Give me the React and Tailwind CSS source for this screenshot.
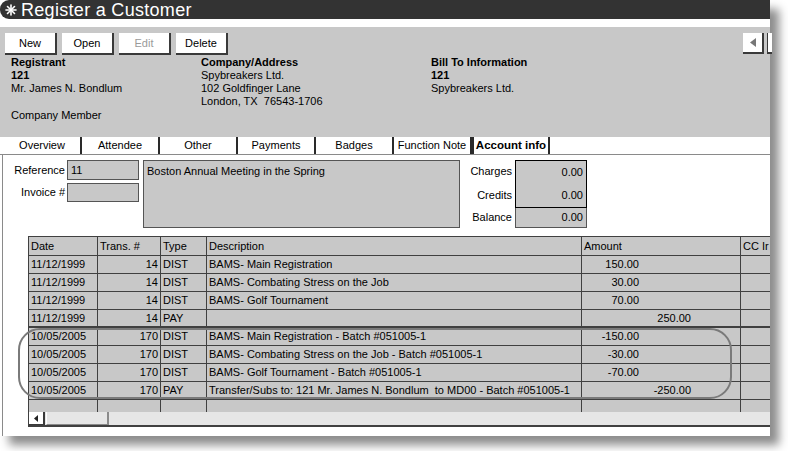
import React from "react";

const font = { fontFamily: '"Liberation Sans", Arial, sans-serif' };

const rows = [
    { date: "11/12/1999", no: "14", type: "DIST", desc: "BAMS- Main Registration", amt: "150.00" },
    { date: "11/12/1999", no: "14", type: "DIST", desc: "BAMS- Combating Stress on the Job", amt: "30.00" },
    { date: "11/12/1999", no: "14", type: "DIST", desc: "BAMS- Golf Tournament", amt: "70.00" },
    { date: "11/12/1999", no: "14", type: "PAY", desc: "", pay: "250.00" },
    { date: "10/05/2005", no: "170", type: "DIST", desc: "BAMS- Main Registration - Batch #051005-1", amt: "-150.00" },
    { date: "10/05/2005", no: "170", type: "DIST", desc: "BAMS- Combating Stress on the Job - Batch #051005-1", amt: "-30.00" },
    { date: "10/05/2005", no: "170", type: "DIST", desc: "BAMS- Golf Tournament - Batch #051005-1", amt: "-70.00" },
    { date: "10/05/2005", no: "170", type: "PAY", desc: "Transfer/Subs to: 121 Mr. James N. Bondlum  to MD00 - Batch #051005-1", pay: "-250.00" },
];

const tabs = ["Overview", "Attendee", "Other", "Payments", "Badges", "Function Note", "Account info"];

function Btn({ label, disabled }) {
    return (
        <div className={"w-[52px] h-[22px] bg-white border-r-2 border-b-2 border-[#3a3a3a] flex items-center justify-center text-[11px] " + (disabled ? "text-[#9a9a9a]" : "text-black")}>
            {label}
        </div>
    );
}

function Cell({ children, className = "" }) {
    return <div className={"border-r border-[#404040] px-[2px] flex items-center whitespace-pre overflow-hidden " + className}>{children}</div>;
}

export default function App() {
    return (
        <div className="w-[788px] h-[451px] bg-white overflow-hidden" style={font}>
            <div className="relative w-[770px] h-[436px] bg-white flex flex-col shadow-[9px_9px_9px_rgba(0,0,0,0.45)]">
                {/* title bar */}
                <div className="h-[19px] bg-[#333333] rounded-l-[9px] flex items-center text-white shrink-0">
                    <svg width="18" height="18" viewBox="0 0 18 18" className="ml-[2px]">
                        <g stroke="white" strokeWidth="1.6" strokeLinecap="round">
                            <line x1="9" y1="4" x2="9" y2="14" />
                            <line x1="4" y1="9" x2="14" y2="9" />
                            <line x1="5.5" y1="5.5" x2="12.5" y2="12.5" />
                            <line x1="12.5" y1="5.5" x2="5.5" y2="12.5" />
                        </g>
                    </svg>
                    <span className="text-[18px] leading-none ml-[1px] tracking-[0.3px]">Register a Customer</span>
                </div>
                <div className="h-[8px] bg-white shrink-0" />

                {/* header */}
                <div className="h-[110px] bg-[#c8c8c8] shrink-0 pt-[6px] px-[5px] text-[11px] text-black">
                    <div className="flex items-start">
                        <div className="flex gap-[5px]">
                            <Btn label="New" />
                            <Btn label="Open" />
                            <Btn label="Edit" disabled />
                            <Btn label="Delete" />
                        </div>
                        <div className="ml-auto flex mr-[-7px]">
                            <div className="w-[21px] h-[21px] bg-white border-r-2 border-b-2 border-[#3a3a3a] flex items-center justify-center">
                                <svg width="6" height="9" viewBox="0 0 6 9"><polygon points="6,0 6,9 0,4.5" fill="#777" /></svg>
                            </div>
                            <div className="w-[5px] h-[21px] ml-[3px] bg-white border-b-2 border-l border-[#3a3a3a]" />
                        </div>
                    </div>
                    <div className="flex leading-[13px] mt-[1px] pl-[6px]">
                        <div className="w-[190px]">
                            <div className="font-bold">Registrant</div>
                            <div className="font-bold">121</div>
                            <div>Mr. James N. Bondlum</div>
                            <div className="mt-[14px]">Company Member</div>
                        </div>
                        <div className="w-[230px]">
                            <div className="font-bold">Company/Address</div>
                            <div>Spybreakers Ltd.</div>
                            <div>102 Goldfinger Lane</div>
                            <div>London, TX&nbsp; 76543-1706</div>
                        </div>
                        <div>
                            <div className="font-bold">Bill To Information</div>
                            <div className="font-bold">121</div>
                            <div>Spybreakers Ltd.</div>
                        </div>
                    </div>
                </div>

                {/* tabs */}
                <div className="h-[18px] bg-white border-b border-[#8a8a8a] flex pl-[4px] shrink-0 text-[11px]">
                    {tabs.map((t, i) => {
                        const active = i === tabs.length - 1;
                        return (
                            <div
                                key={t}
                                className={"w-[78px] h-full flex items-center justify-center border-r-2 border-[#2a2a2a] " + (active ? "font-bold border-l-2 bg-white h-[19px] text-[11.5px]" : "")}
                            >
                                {t}
                            </div>
                        );
                    })}
                </div>

                {/* content */}
                <div className="flex-1 ml-[2px] border-l border-[#8a8a8a] bg-white pt-[5px] text-[11px] flex flex-col">
                    <div className="flex items-start pl-[3px]">
                        <div className="flex flex-col gap-[3px]">
                            <div className="flex items-center">
                                <div className="w-[61px] text-right pr-[2px]">Reference</div>
                                <div className="w-[72px] h-[20px] bg-[#c8c8c8] border border-[#555] flex items-center px-[3px]">11</div>
                            </div>
                            <div className="flex items-center">
                                <div className="w-[61px] text-right pr-[2px]">Invoice #</div>
                                <div className="w-[72px] h-[19px] bg-[#c8c8c8] border border-[#555]" />
                            </div>
                        </div>
                        <div className="ml-[4px] w-[317px] h-[68px] bg-[#c8c8c8] border border-[#555] px-[3px] pt-[2px]">
                            Boston Annual Meeting in the Spring
                        </div>
                        <div className="flex">
                            <div className="w-[55px] text-right pr-[3px] flex flex-col">
                                <div className="h-[23px] flex items-center justify-end">Charges</div>
                                <div className="h-[24px] flex items-center justify-end">Credits</div>
                                <div className="h-[21px] flex items-center justify-end">Balance</div>
                            </div>
                            <div className="w-[72px] flex flex-col">
                                <div className="h-[48px] border border-black bg-[#c8c8c8] flex flex-col">
                                    <div className="h-[23px] flex items-center justify-end pr-[3px]">0.00</div>
                                    <div className="h-[23px] flex items-center justify-end pr-[3px]">0.00</div>
                                </div>
                                <div className="h-[20px] border border-t-0 border-[#555] bg-[#c8c8c8] flex items-center justify-end pr-[3px]">0.00</div>
                            </div>
                        </div>
                    </div>

                    {/* grid */}
                    <div className="mt-[8px] ml-[25px] h-[191px] bg-[#c8c8c8] border-t border-l border-b-2 border-[#404040] overflow-hidden flex flex-col">
                        <div className="grid grid-cols-[69px_63px_46px_375px_159px_60px] h-[19px] border-b border-[#404040]">
                            <Cell>Date</Cell>
                            <Cell>Trans. #</Cell>
                            <Cell>Type</Cell>
                            <Cell>Description</Cell>
                            <Cell>Amount</Cell>
                            <Cell>CC Ir</Cell>
                        </div>
                        {rows.map((r, i) => (
                            <div key={i} className={"grid grid-cols-[69px_63px_46px_375px_159px_60px] h-[18px] border-b border-[#404040] " + (i === 3 ? "border-b-2" : "")}>
                                <Cell>{r.date}</Cell>
                                <Cell className="justify-end">{r.no}</Cell>
                                <Cell>{r.type}</Cell>
                                <Cell>{r.desc}</Cell>
                                <Cell className={"justify-end " + (r.pay ? "pr-[49px]" : "pr-[101px]")}>{r.pay || r.amt}</Cell>
                                <Cell />
                            </div>
                        ))}
                        <div className="grid grid-cols-[69px_63px_46px_375px_159px_60px] h-[12px]">
                            <Cell />
                            <Cell />
                            <Cell />
                            <Cell />
                            <Cell />
                            <Cell />
                        </div>
                        <div className="flex-1 bg-[#e6e6e6] flex items-stretch">
                            <div className="w-[16px] bg-white border-r-2 border-b border-[#3a3a3a] flex items-center justify-center">
                                <svg width="4" height="7" viewBox="0 0 4 7"><polygon points="4,0 4,7 0,3.5" fill="#222" /></svg>
                            </div>
                            <div className="w-[63px] ml-[1px] bg-[#e6e6e6] border-r-2 border-b border-[#8a8a8a] border-l border-l-white" />
                        </div>
                    </div>
                </div>

                {/* hand-drawn annotation */}
                <div className="absolute left-[18px] top-[328px] w-[714px] h-[71px] border-2 border-[#7a7a7a] rounded-[22px] pointer-events-none" />
            </div>
        </div>
    );
}
